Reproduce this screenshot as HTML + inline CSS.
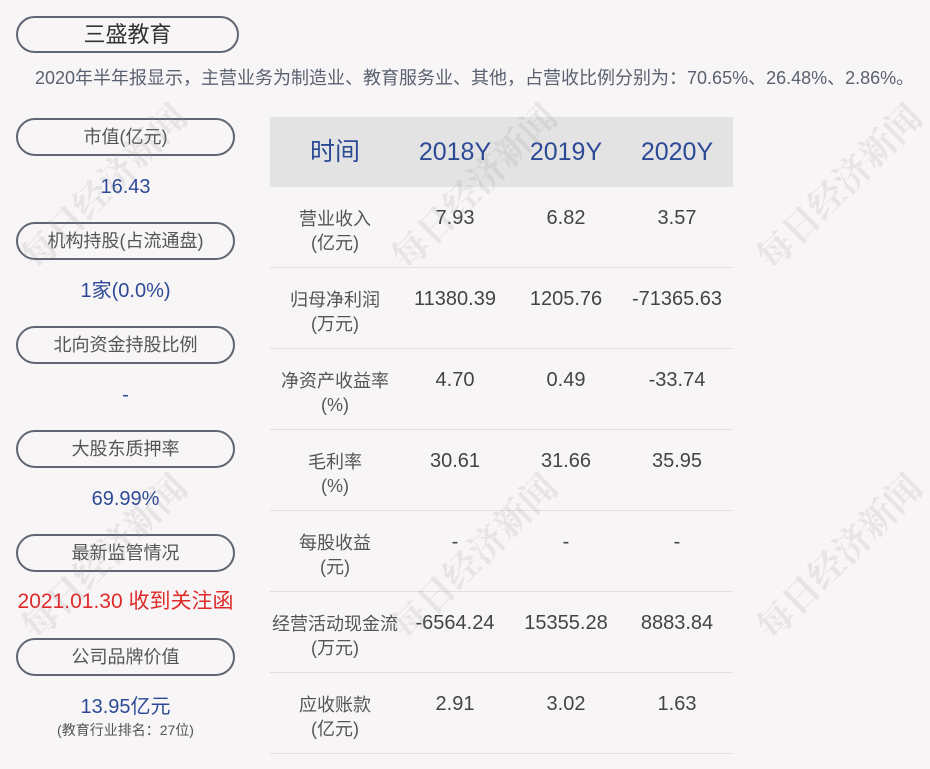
<!DOCTYPE html><html><head><meta charset="utf-8"><style>
body{margin:0;width:930px;height:769px;background:#f8f5f6;font-family:"Liberation Sans","Noto Sans CJK SC",sans-serif;position:relative;overflow:hidden;color:#444}
.a{position:absolute}
.pill{position:absolute;left:16px;width:215px;height:34px;border:2px solid #5f6673;border-radius:19px;text-align:center;line-height:34px;font-size:18px;color:#555}
.val{position:absolute;left:16px;width:219px;text-align:center;font-size:20px;line-height:24px;color:#2d4a97}
.hline{position:absolute;left:270px;width:463px;height:1px;background:#e2dfe0}
.lab{position:absolute;left:270px;width:130px;text-align:center;font-size:18px;line-height:24px;color:#555}
.c{position:absolute;width:110px;text-align:center;font-size:20px;color:#444}
.h{position:absolute;width:110px;text-align:center;font-size:25px;line-height:30px;color:#2d4a97;top:137px}
.wm{position:absolute;font-size:36px;font-weight:bold;color:rgba(150,150,150,0.17);transform:rotate(-45deg);font-family:"Noto Serif CJK SC",serif;white-space:nowrap}
</style></head><body>
<div class="pill" style="top:16px;width:219px;height:33px;line-height:33px;font-size:22px;color:#333">三盛教育</div>
<div class="a" style="left:35px;top:64px;font-size:18px;color:#5a6170">2020年半年报显示，主营业务为制造业、教育服务业、其他，占营收比例分别为：70.65%、26.48%、2.86%。</div>

<div class="pill" style="top:118px">市值(亿元)</div>
<div class="val" style="top:175px">16.43</div>
<div class="pill" style="top:222px">机构持股(占流通盘)</div>
<div class="val" style="top:279px">1家(0.0%)</div>
<div class="pill" style="top:326px">北向资金持股比例</div>
<div class="val" style="top:383px">-</div>
<div class="pill" style="top:430px">大股东质押率</div>
<div class="val" style="top:487px">69.99%</div>
<div class="pill" style="top:534px">最新监管情况</div>
<div class="val" style="top:590px;color:#e02a2a;font-size:21px">2021.01.30 收到关注函</div>
<div class="pill" style="top:638px">公司品牌价值</div>
<div class="val" style="top:695px">13.95亿元</div>
<div class="a" style="left:16px;width:219px;top:720px;text-align:center;font-size:14px;color:#555">(教育行业排名：27位)</div>

<div class="a" style="left:270px;top:117px;width:463px;height:70px;background:#e3e3e3"></div>
<div class="h" style="left:280px">时间</div>
<div class="h" style="left:400px">2018Y</div>
<div class="h" style="left:511px">2019Y</div>
<div class="h" style="left:622px">2020Y</div>

<div class="hline" style="top:267px"></div><div class="hline" style="top:348px"></div><div class="hline" style="top:429px"></div><div class="hline" style="top:510px"></div><div class="hline" style="top:591px"></div><div class="hline" style="top:672px"></div><div class="hline" style="top:753px"></div>

<div class="lab" style="top:207px">营业收入<br>(亿元)</div>
<div class="c" style="left:400px;top:207px">7.93</div><div class="c" style="left:511px;top:207px">6.82</div><div class="c" style="left:622px;top:207px">3.57</div>
<div class="lab" style="top:288px">归母净利润<br>(万元)</div>
<div class="c" style="left:400px;top:288px">11380.39</div><div class="c" style="left:511px;top:288px">1205.76</div><div class="c" style="left:622px;top:288px">-71365.63</div>
<div class="lab" style="top:369px">净资产收益率<br>(%)</div>
<div class="c" style="left:400px;top:369px">4.70</div><div class="c" style="left:511px;top:369px">0.49</div><div class="c" style="left:622px;top:369px">-33.74</div>
<div class="lab" style="top:450px">毛利率<br>(%)</div>
<div class="c" style="left:400px;top:450px">30.61</div><div class="c" style="left:511px;top:450px">31.66</div><div class="c" style="left:622px;top:450px">35.95</div>
<div class="lab" style="top:531px">每股收益<br>(元)</div>
<div class="c" style="left:400px;top:531px">-</div><div class="c" style="left:511px;top:531px">-</div><div class="c" style="left:622px;top:531px">-</div>
<div class="lab" style="top:612px">经营活动现金流<br>(万元)</div>
<div class="c" style="left:400px;top:612px">-6564.24</div><div class="c" style="left:511px;top:612px">15355.28</div><div class="c" style="left:622px;top:612px">8883.84</div>
<div class="lab" style="top:693px">应收账款<br>(亿元)</div>
<div class="c" style="left:400px;top:693px">2.91</div><div class="c" style="left:511px;top:693px">3.02</div><div class="c" style="left:622px;top:693px">1.63</div>

<div class="wm" style="left:-5px;top:160px">每日经济新闻</div>
<div class="wm" style="left:365px;top:160px">每日经济新闻</div>
<div class="wm" style="left:730px;top:160px">每日经济新闻</div>
<div class="wm" style="left:-5px;top:530px">每日经济新闻</div>
<div class="wm" style="left:365px;top:530px">每日经济新闻</div>
<div class="wm" style="left:730px;top:530px">每日经济新闻</div>
</body></html>
